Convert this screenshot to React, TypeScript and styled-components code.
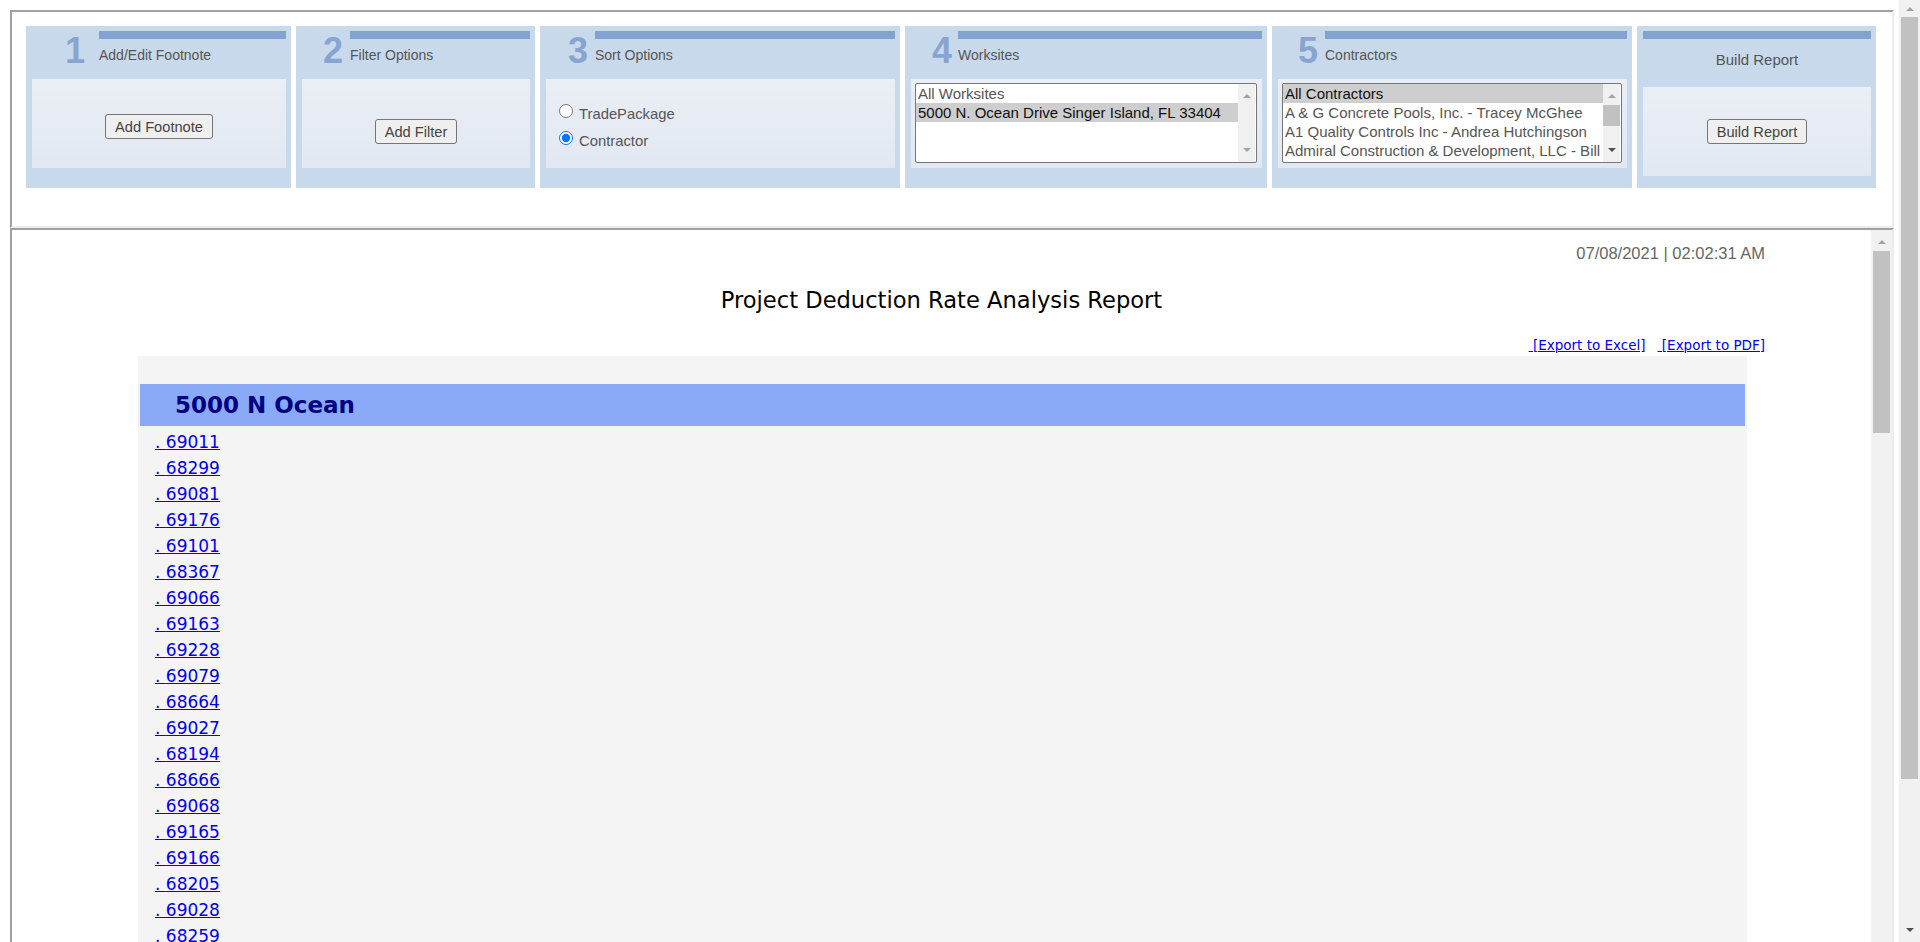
import React from "react";
import styled, { createGlobalStyle } from "styled-components";

const GlobalStyle = createGlobalStyle`
  html, body { margin: 0; padding: 0; height: 100%; overflow: hidden; background: #fff; }
  body { font-family: "Liberation Sans", Arial, sans-serif; }
  * { box-sizing: border-box; }
`;

const Viewport = styled.div`
  display: flex;
  width: 100%;
  height: 100vh;
  overflow: hidden;
  background: #fff;
`;

const Page = styled.div`
  flex: 1;
  min-width: 0;
  display: flex;
  flex-direction: column;
  padding: 10px 5px 0 10px;
`;

const TopFrame = styled.div`
  height: 218px;
  flex-shrink: 0;
  border: 2px solid;
  border-color: #a0a0a0 #ececec #ececec #a0a0a0;
  padding: 14px 0 0 14px;
`;

const StepRow = styled.div`
  display: grid;
  grid-template-columns: 265px 239px 360px 362px 360px 239px;
  column-gap: 5px;
`;

const Panel = styled.div`
  height: 162px;
  background: #c9d9ec;
  padding: 5px 5px 0 6px;
  display: flex;
  flex-direction: column;
`;

const PanelHead = styled.div<{ $tall?: boolean }>`
  display: flex;
  height: ${(p) => (p.$tall ? 56 : 48)}px;
  flex-shrink: 0;
`;

const StepNum = styled.div<{ $w: number; $pr: number }>`
  width: ${(p) => p.$w}px;
  padding-right: ${(p) => p.$pr}px;
  flex-shrink: 0;
  text-align: right;
  font: bold 36px/40px "Liberation Sans", Arial, sans-serif;
  color: #87a5d0;
`;

const HeadMain = styled.div`
  flex: 1;
  min-width: 0;
  display: flex;
  flex-direction: column;
`;

const Stripe = styled.div`
  height: 8px;
  background: #82a3cf;
`;

const StepTitle = styled.div<{ $center?: boolean }>`
  margin-top: ${(p) => (p.$center ? 13 : 8)}px;
  font-size: ${(p) => (p.$center ? 15 : 14)}px;
  line-height: 16px;
  color: #555;
  text-align: ${(p) => (p.$center ? "center" : "left")};
  white-space: nowrap;
`;

const PanelBody = styled.div<{ $pad?: string; $align?: string }>`
  height: 89px;
  background: linear-gradient(#eaeef5, #e2e8f2);
  display: flex;
  flex-direction: column;
  align-items: ${(p) => p.$align || "center"};
  padding: ${(p) => p.$pad || "0"};
`;

const Button = styled.button`
  height: 25px;
  padding: 0 9px;
  font: 14.67px "Liberation Sans", Arial, sans-serif;
  color: #444;
  background: #efefef;
  border: 1px solid #767676;
  border-radius: 3px;
`;

const RadioList = styled.div`
  display: flex;
  flex-direction: column;
  padding: 21px 0 0 13px;
`;

const RadioRow = styled.label`
  display: flex;
  align-items: center;
  height: 27px;
  font-size: 14.8px;
  color: #555;
`;

const Radio = styled.input`
  width: 14px;
  height: 14px;
  margin: -5px 6px 0 0;
`;

const ListBox = styled.div`
  display: flex;
  height: 80px;
  border: 1px solid #767676;
  border-radius: 2px;
  background: #fff;
  overflow: hidden;
`;

const Options = styled.div`
  flex: 1;
  min-width: 0;
  overflow: hidden;
`;

const Option = styled.div<{ $sel?: boolean }>`
  height: 19px;
  line-height: 19px;
  padding-left: 2px;
  font-size: 15px;
  white-space: nowrap;
  overflow: hidden;
  color: ${(p) => (p.$sel ? "#101010" : "#555")};
  background: ${(p) => (p.$sel ? "#cecece" : "transparent")};
`;

const ListScroll = styled.div`
  width: 17px;
  margin-right: 1px;
  flex-shrink: 0;
  background: #f0f0f0;
  display: flex;
  flex-direction: column;
  align-items: stretch;
  padding: 6px 0;
`;

const ArrowBox = styled.div<{ $h: number; $pt?: number }>`
  height: ${(p) => p.$h}px;
  flex-shrink: 0;
  display: flex;
  justify-content: center;
  align-items: center;
  padding-top: ${(p) => p.$pt || 0}px;
`;

const Arrow = styled.span<{ $dir: "up" | "down"; $dim?: boolean; $w?: number }>`
  width: 0;
  height: 0;
  border-left: ${(p) => (p.$w || 8) / 2}px solid transparent;
  border-right: ${(p) => (p.$w || 8) / 2}px solid transparent;
  ${(p) =>
    p.$dir === "up"
      ? `border-bottom: ${(p.$w || 8) / 2}px solid ${p.$dim ? "#a3a3a3" : "#505050"};`
      : `border-top: ${(p.$w || 8) / 2}px solid ${p.$dim ? "#a3a3a3" : "#505050"};`}
`;

const Thumb = styled.div<{ $h: number; $mt?: number; $inset?: number }>`
  height: ${(p) => p.$h}px;
  margin: ${(p) => p.$mt || 0}px ${(p) => p.$inset || 0}px 0;
  background: #c1c1c1;
  flex-shrink: 0;
`;

const Spacer = styled.div`
  flex: 1;
`;

const BottomFrame = styled.div`
  flex: 1;
  min-height: 0;
  display: flex;
  border-top: 2px solid #a0a0a0;
  border-left: 2px solid #a0a0a0;
  border-right: 2px solid #ececec;
  overflow: hidden;
`;

const Report = styled.div`
  flex: 1;
  min-width: 0;
  display: flex;
  flex-direction: column;
  overflow: hidden;
`;

const DateLine = styled.div`
  margin-top: 14px;
  padding-right: 106px;
  text-align: right;
  font: 16.5px/18px "Liberation Sans", Arial, sans-serif;
  color: #666;
`;

const ReportTitle = styled.h1`
  margin: 25px 0 0;
  text-align: center;
  font: normal 22.6px/26px "DejaVu Sans", Verdana, sans-serif;
  color: #000;
`;

const ExportBar = styled.div`
  margin-top: 24px;
  padding-right: 106px;
  display: flex;
  justify-content: flex-end;
  gap: 12px;
  font: 13.5px/16px "DejaVu Sans", Verdana, sans-serif;
`;

const Link = styled.a`
  color: #0000ee;
  text-decoration: underline;
  white-space: pre;
`;

const GrayBox = styled.div`
  margin: 3px 124px 0 126px;
  padding: 28px 2px 0;
  background: #f4f4f4;
  flex: 1;
`;

const SiteBar = styled.div`
  height: 42px;
  display: flex;
  align-items: center;
  padding-left: 35px;
  background: #8aaaf8;
  font: bold 23px "DejaVu Sans", Verdana, sans-serif;
  color: #000080;
`;

const RowList = styled.div`
  padding: 3px 0 0 15px;
`;

const Row = styled.div`
  height: 26px;
  font: 17px/26px "DejaVu Sans", Verdana, sans-serif;
`;

const FrameScroll = styled.div`
  width: 21px;
  flex-shrink: 0;
  background: #f1f1f1;
  display: flex;
  flex-direction: column;
`;

const PageScroll = styled.div`
  width: 21px;
  flex-shrink: 0;
  background: #f1f1f1;
  display: flex;
  flex-direction: column;
`;

const worksites = ["All Worksites", "5000 N. Ocean Drive Singer Island, FL 33404"];
const contractors = [
  "All Contractors",
  "A & G Concrete Pools, Inc. - Tracey McGhee",
  "A1 Quality Controls Inc - Andrea Hutchingson",
  "Admiral Construction & Development, LLC - Bill",
];
const ids = [
  "69011", "68299", "69081", "69176", "69101", "68367", "69066", "69163", "69228", "69079",
  "68664", "69027", "68194", "68666", "69068", "69165", "69166", "68205", "69028", "68259",
];

export default function App() {
  return (
    <>
      <GlobalStyle />
      <Viewport>
        <Page>
          <TopFrame>
            <StepRow>
              <Panel>
                <PanelHead>
                  <StepNum $w={67} $pr={14}>1</StepNum>
                  <HeadMain>
                    <Stripe />
                    <StepTitle>Add/Edit Footnote</StepTitle>
                  </HeadMain>
                </PanelHead>
                <PanelBody $pad="35px 0 0">
                  <Button>Add Footnote</Button>
                </PanelBody>
              </Panel>

              <Panel>
                <PanelHead>
                  <StepNum $w={48} $pr={7}>2</StepNum>
                  <HeadMain>
                    <Stripe />
                    <StepTitle>Filter Options</StepTitle>
                  </HeadMain>
                </PanelHead>
                <PanelBody $pad="40px 0 0">
                  <Button>Add Filter</Button>
                </PanelBody>
              </Panel>

              <Panel>
                <PanelHead>
                  <StepNum $w={49} $pr={7}>3</StepNum>
                  <HeadMain>
                    <Stripe />
                    <StepTitle>Sort Options</StepTitle>
                  </HeadMain>
                </PanelHead>
                <PanelBody $align="stretch">
                  <RadioList>
                    <RadioRow>
                      <Radio type="radio" name="sort" />
                      TradePackage
                    </RadioRow>
                    <RadioRow>
                      <Radio type="radio" name="sort" defaultChecked />
                      Contractor
                    </RadioRow>
                  </RadioList>
                </PanelBody>
              </Panel>

              <Panel>
                <PanelHead>
                  <StepNum $w={47} $pr={6}>4</StepNum>
                  <HeadMain>
                    <Stripe />
                    <StepTitle>Worksites</StepTitle>
                  </HeadMain>
                </PanelHead>
                <PanelBody $align="stretch" $pad="4px 5px 0 4px">
                  <ListBox>
                    <Options>
                      {worksites.map((w, i) => (
                        <Option key={w} $sel={i === 1}>{w}</Option>
                      ))}
                    </Options>
                    <ListScroll>
                      <ArrowBox $h={12}><Arrow $dir="up" $dim /></ArrowBox>
                      <Spacer />
                      <ArrowBox $h={12}><Arrow $dir="down" $dim /></ArrowBox>
                    </ListScroll>
                  </ListBox>
                </PanelBody>
              </Panel>

              <Panel>
                <PanelHead>
                  <StepNum $w={47} $pr={7}>5</StepNum>
                  <HeadMain>
                    <Stripe />
                    <StepTitle>Contractors</StepTitle>
                  </HeadMain>
                </PanelHead>
                <PanelBody $align="stretch" $pad="4px 5px 0 4px">
                  <ListBox>
                    <Options>
                      {contractors.map((c, i) => (
                        <Option key={c} $sel={i === 0}>{c}</Option>
                      ))}
                    </Options>
                    <ListScroll>
                      <ArrowBox $h={12}><Arrow $dir="up" $dim /></ArrowBox>
                      <Thumb $h={21} $mt={3} />
                      <Spacer />
                      <ArrowBox $h={12}><Arrow $dir="down" /></ArrowBox>
                    </ListScroll>
                  </ListBox>
                </PanelBody>
              </Panel>

              <Panel>
                <PanelHead $tall>
                  <HeadMain>
                    <Stripe />
                    <StepTitle $center>Build Report</StepTitle>
                  </HeadMain>
                </PanelHead>
                <PanelBody $pad="32px 0 0">
                  <Button>Build Report</Button>
                </PanelBody>
              </Panel>
            </StepRow>
          </TopFrame>

          <BottomFrame>
            <Report>
              <DateLine>07/08/2021 | 02:02:31 AM</DateLine>
              <ReportTitle>Project Deduction Rate Analysis Report</ReportTitle>
              <ExportBar>
                <Link href="#"> [Export to Excel]</Link>
                <Link href="#"> [Export to PDF]</Link>
              </ExportBar>
              <GrayBox>
                <SiteBar>5000 N Ocean</SiteBar>
                <RowList>
                  {ids.map((id) => (
                    <Row key={id}>
                      <Link href="#">. {id}</Link>
                    </Row>
                  ))}
                </RowList>
              </GrayBox>
            </Report>
            <FrameScroll>
              <ArrowBox $h={21} $pt={3}><Arrow $dir="up" $dim /></ArrowBox>
              <Thumb $h={182} $inset={2} />
              <Spacer />
            </FrameScroll>
          </BottomFrame>
        </Page>
        <PageScroll>
          <ArrowBox $h={17}><Arrow $dir="up" $dim /></ArrowBox>
          <Thumb $h={762} $inset={2} />
          <Spacer />
          <ArrowBox $h={24}><Arrow $dir="down" /></ArrowBox>
        </PageScroll>
      </Viewport>
    </>
  );
}
